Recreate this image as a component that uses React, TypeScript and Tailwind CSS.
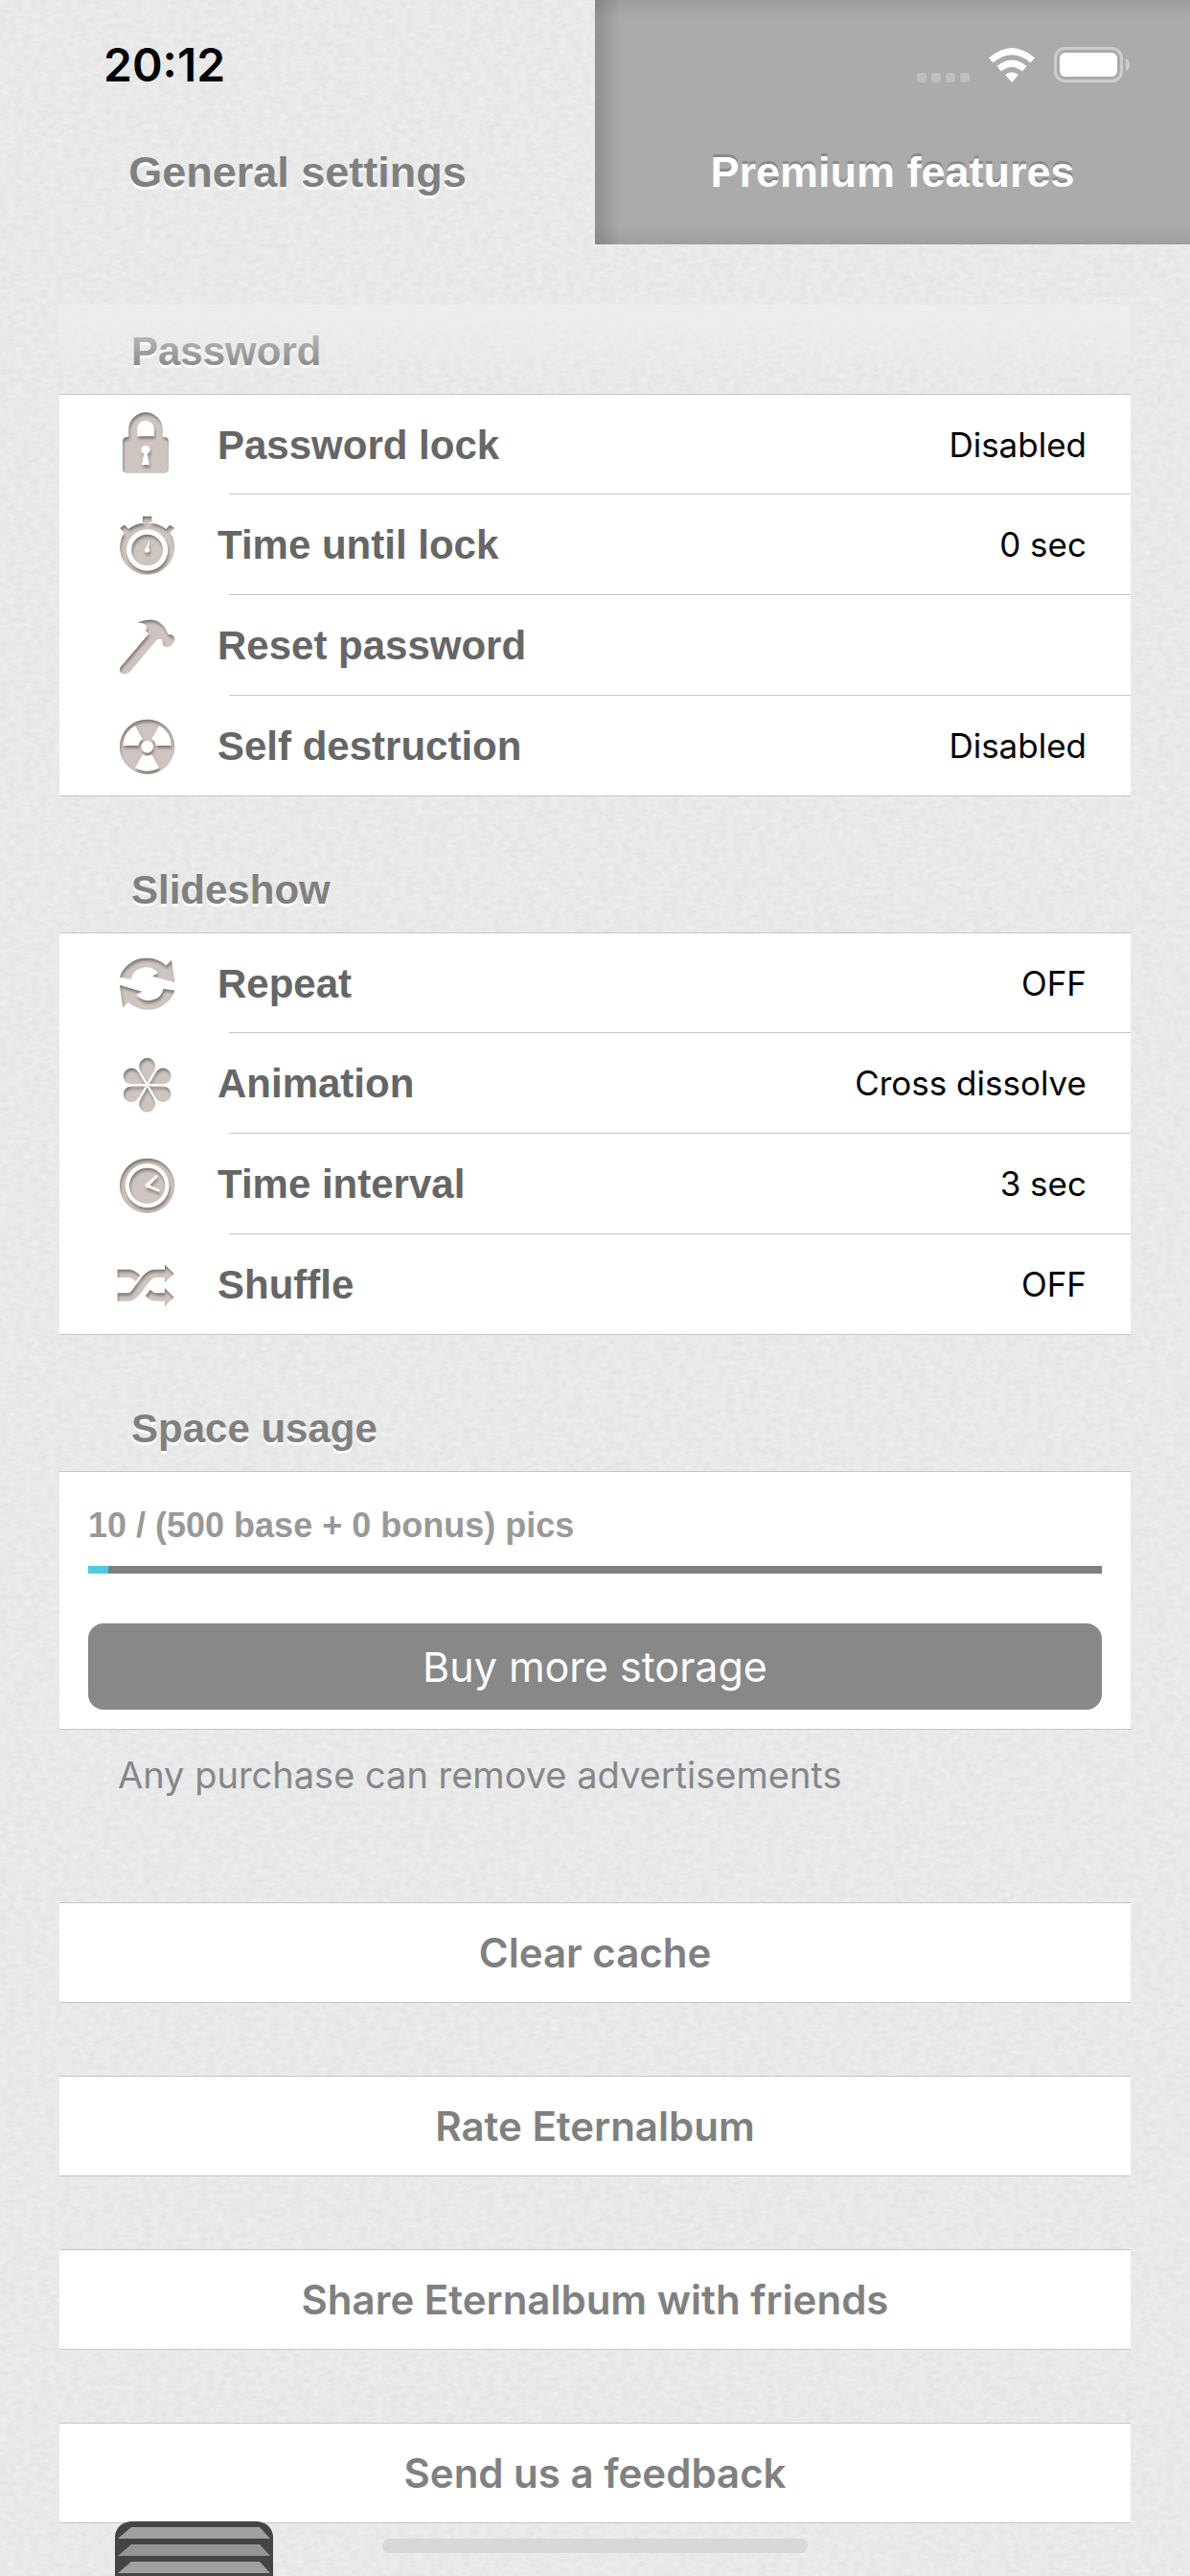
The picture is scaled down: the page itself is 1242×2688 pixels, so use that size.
import type { ReactNode } from "react";

const ICONS: Record<string, ReactNode> = {
  lock: (
    <path
      fillRule="evenodd"
      d="M38 78H43V54A53 53 0 0 1 149 54V78H154Q168 80 168 92V177Q168 191 154 191H38Q24 191 24 177V92Q24 80 38 78ZM69 76H123V54A27 28 0 0 0 69 54ZM90 131L84 166H108L102 131A14 14 0 1 0 90 131Z"
    />
  ),
  stopwatch: (
    <>
      <path
        fillRule="evenodd"
        d="M16 48L30 38L42 51A85 85 0 0 1 94 32V30H87V11H115V30H108V32A85 85 0 0 1 160 51L172 38L186 48L173 64A85 85 0 1 1 29 64ZM36 117A65 65 0 1 0 166 117A65 65 0 1 0 36 117Z"
      />
      <path
        fillRule="evenodd"
        d="M52 117A49 49 0 1 0 150 117A49 49 0 1 0 52 117ZM108 84L105 110A8 8 0 1 1 97 110Z"
      />
    </>
  ),
  hammer: (
    <path d="M70 30C85 20 118 16 135 26C150 34 162 52 166 66L176 67Q186 72 187 82Q182 102 164 106Q150 104 149 92L148 84Q140 76 130 84L46 184Q36 194 22 188Q12 180 16 170L106 64L96 54Q104 46 96 36Q84 28 70 30Z" />
  ),
  radiation: (
    <path
      fillRule="evenodd"
      d="M15 106A86 86 0 1 0 187 106A86 86 0 1 0 15 106ZM25 102A76 76 0 0 1 63 40L87 82A27 27 0 0 0 74 102ZM177 102A76 76 0 0 0 139 40L115 82A27 27 0 0 1 128 102ZM63 172L87 130A27 27 0 0 0 115 130L139 172A76 76 0 0 1 63 172ZM82 106A19 19 0 1 0 120 106A19 19 0 1 0 82 106Z"
    />
  ),
  repeat: (
    <>
      <path d="M15 83A88 86 0 0 1 160 47L177 30L187 100L118 80L135 70A48 46 0 0 0 50 89Z" />
      <path d="M187 125A88 86 0 0 1 42 161L25 178L15 108L84 128L67 138A48 46 0 0 0 152 119Z" />
    </>
  ),
  flower: (
    <path d="M101 100C94 82 76 64 76 46A25 25 0 0 1 126 46C126 64 108 82 101 100ZM106 103C118 88 125 64 140 55A25 25 0 0 1 165 98C150 107 125 100 106 103ZM106 109C125 112 150 105 165 114A25 25 0 0 1 140 157C125 148 118 124 106 109ZM101 112C108 130 126 148 126 166A25 25 0 0 1 76 166C76 148 94 130 101 112ZM96 109C84 124 77 148 62 157A25 25 0 0 1 37 114C52 105 77 112 96 109ZM96 103C77 100 52 107 37 98A25 25 0 0 1 62 55C77 64 84 88 96 103Z" />
  ),
  clock: (
    <>
      <path
        fillRule="evenodd"
        d="M15 106A86 86 0 1 0 187 106A86 86 0 1 0 15 106ZM32 106A69 69 0 1 0 170 106A69 69 0 1 0 32 106Z"
      />
      <path
        fillRule="evenodd"
        d="M45 106A56 56 0 1 0 157 106A56 56 0 1 0 45 106ZM101 97L130 71L135 76L109 104L141 119L138 125L106 113A8 8 0 1 1 101 97Z"
      />
    </>
  ),
  shuffle: (
    <>
      <path d="M8 130H42C58 130 84 56 124 56H156V41L185 69L156 96V81H128C104 81 78 155 44 155H8Z" />
      <path d="M8 56H40C58 56 68 64 78 74L64 93C56 84 50 81 38 81H8Z" />
      <path d="M111 119C118 127 124 130 132 130H156V115L185 143L156 170V155H130C114 155 104 148 96 139Z" />
    </>
  ),
};

const PASSWORD_ROWS = [
  { icon: "lock", title: "Password lock", value: "Disabled" },
  { icon: "stopwatch", title: "Time until lock", value: "0 sec" },
  { icon: "hammer", title: "Reset password" },
  { icon: "radiation", title: "Self destruction", value: "Disabled" },
];

const SLIDESHOW_ROWS = [
  { icon: "repeat", title: "Repeat", value: "OFF" },
  { icon: "flower", title: "Animation", value: "Cross dissolve" },
  { icon: "clock", title: "Time interval", value: "3 sec" },
  { icon: "shuffle", title: "Shuffle", value: "OFF" },
];

const ACTIONS = [
  "Clear cache",
  "Rate Eternalbum",
  "Share Eternalbum with friends",
  "Send us a feedback",
];

const SectionTitle = ({ title }: { title: string }) => (
  <h2 className="pl-[75px] pb-[20px] font-['Liberation_Sans',sans-serif] text-[42px] leading-[48px] font-bold text-[#808080] [text-shadow:0_3px_0_#fff]">
    {title}
  </h2>
);

interface SettingListProps {
  rows: { icon: string; title: string; value?: string }[];
}

const SettingList = ({ rows }: SettingListProps) => (
  <ul className="border-t border-[#c5c5c5] bg-white">
    {rows.map((row, i) => (
      <li key={row.title}>
        <button
          className={`flex w-full items-center pl-[58px] text-left ${
            i === 0 ? "h-[104px]" : "h-[105px]"
          } ${i === rows.length - 1 ? "border-b border-[#c5c5c5]" : ""}`}>
          <svg
            viewBox="0 0 204 204"
            className="h-[68px] w-[68px] shrink-0 fill-[#cfc5c0]"
            filter="url(#engrave)">
            {ICONS[row.icon]}
          </svg>
          <span
            className={`ml-[51px] flex h-full flex-1 items-center justify-between ${
              i < rows.length - 1
                ? "bg-[linear-gradient(#c5c5c5,#c5c5c5)] bg-[length:100%_1px] bg-[position:0_100%] bg-no-repeat"
                : ""
            }`}>
            <span className="-ml-[12px] font-['Liberation_Sans',sans-serif] text-[42px] font-bold text-[#666]">
              {row.title}
            </span>
            <span className="pr-[46px] text-[35px] text-black">
              {row.value}
            </span>
          </span>
        </button>
      </li>
    ))}
  </ul>
);

const StatusBar = () => (
  <div className="pointer-events-none absolute inset-x-0 top-0 flex h-[135px] items-center justify-between pr-[63px] pl-[108px]">
    <span className="text-[48px] font-semibold text-black">20:12</span>
    <div className="flex items-center">
      <div className="mt-[26px] flex gap-[5px]">
        <span className="h-[10px] w-[10px] rounded-[3px] bg-[#bfbfbf]" />
        <span className="h-[10px] w-[10px] rounded-[3px] bg-[#bfbfbf]" />
        <span className="h-[10px] w-[10px] rounded-[3px] bg-[#bfbfbf]" />
        <span className="h-[10px] w-[10px] rounded-[3px] bg-[#bfbfbf]" />
      </div>
      <svg viewBox="0 0 96 72" className="ml-[20px] h-[36px] w-[48px] fill-white">
        <path d="M0 21Q48 -21 96 21L87 31Q48 -2 9 31Z" />
        <path d="M17 38Q48 12 79 38L70 49Q48 31 26 49Z" />
        <path d="M34 56Q48 45 62 56L48 72Z" />
      </svg>
      <svg viewBox="0 0 158 74" className="ml-[20px] h-[37px] w-[79px]">
        <rect x="3" y="3" width="138" height="68" rx="20" fill="none" stroke="#cdcdcd" strokeWidth="6" />
        <rect x="12" y="12" width="120" height="50" rx="12" fill="#fff" />
        <path d="M150 24Q158 28 158 37Q158 46 150 50Z" fill="#cdcdcd" />
      </svg>
    </div>
  </div>
);

export default function App() {
  const used = 10;
  const total = 500;

  return (
    <div className="relative isolate min-h-screen overflow-hidden bg-[#e9e9e9] font-['Inter',sans-serif]">
      {/* Paper grain behind everything */}
      <svg className="absolute inset-0 -z-10 h-full w-full" aria-hidden="true">
        <filter id="paper" x="0" y="0" width="100%" height="100%" colorInterpolationFilters="sRGB">
          <feTurbulence type="fractalNoise" baseFrequency="0.12 0.2" numOctaves="2" seed="4" />
          <feColorMatrix values="0.06 0 0 0 0.883  0.06 0 0 0 0.883  0.06 0 0 0 0.883  0 0 0 0 1" />
        </filter>
        <filter id="engrave">
          <feGaussianBlur in="SourceAlpha" stdDeviation="1.5" />
          <feOffset dx="1" dy="3" result="moved" />
          <feComposite in="SourceAlpha" in2="moved" operator="out" result="edge" />
          <feFlood floodColor="#5f5852" floodOpacity="0.8" />
          <feComposite in2="edge" operator="in" result="shade" />
          <feMerge>
            <feMergeNode in="SourceGraphic" />
            <feMergeNode in="shade" />
          </feMerge>
        </filter>
        <rect width="100%" height="100%" filter="url(#paper)" />
      </svg>

      <header className="relative">
        <nav className="grid grid-cols-2 font-['Liberation_Sans',sans-serif] text-[45px] leading-[52px] font-bold">
          <button className="h-[255px] pt-[104px] text-[#808080] [text-shadow:0_3px_0_#fff]">
            General settings
          </button>
          <button className="h-[255px] bg-[#ababab] bg-[linear-gradient(to_right,rgba(0,0,0,0.16),transparent_28px),linear-gradient(to_bottom,rgba(0,0,0,0.08),transparent_20px),linear-gradient(to_top,rgba(0,0,0,0.08),transparent_20px)] pt-[104px] text-white [text-shadow:0_-3px_0_#8a8a8a]">
            Premium features
          </button>
        </nav>
        <StatusBar />
      </header>

      <main className="px-[62px] pt-[63px]">
        <section>
          <div className="relative pt-[25px]">
            <SectionTitle title="Password" />
            <div className="absolute inset-0 bg-[linear-gradient(rgba(238,238,238,0.9),rgba(238,238,238,0)_72px)]" />
          </div>
          <SettingList rows={PASSWORD_ROWS} />
        </section>

        <section className="pt-[74px]">
          <SectionTitle title="Slideshow" />
          <SettingList rows={SLIDESHOW_ROWS} />
        </section>

        <section className="pt-[74px]">
          <SectionTitle title="Space usage" />
          <div className="flex flex-col border-y border-[#c5c5c5] bg-white px-[30px] pt-[34px] pb-[20px]">
            <p className="font-['Liberation_Sans',sans-serif] text-[36px] leading-[44px] font-bold text-[#999]">
              10 / (500 base + 0 bonus) pics
            </p>
            <div
              role="progressbar"
              aria-valuenow={used}
              aria-valuemax={total}
              className="mt-[20px] h-[8px] bg-[#7f7f7f]">
              <div
                className="h-full bg-[#52c8e4]"
                style={{ width: `${(used / total) * 100}%` }}
              />
            </div>
            <button className="mt-[52px] h-[90px] rounded-[16px] bg-[#888] text-[43px] text-white">
              Buy more storage
            </button>
          </div>
          <p className="pt-[22px] pl-[61px] text-[38px] leading-[50px] text-[#86868b]">
            Any purchase can remove advertisements
          </p>
        </section>

        <div className="flex flex-col gap-[76px] pt-[108px]">
          {ACTIONS.map((action) => (
            <button
              key={action}
              className="h-[105px] border-y border-[#c5c5c5] bg-white text-[42px] font-semibold text-[#808080]">
              {action}
            </button>
          ))}
        </div>
      </main>

      <button aria-label="Open drawer" className="fixed bottom-0 left-[120px]">
        <svg viewBox="0 0 165 57" className="block h-[57px] w-[165px]">
          <path d="M0 57V15Q2 2 16 0H149Q163 2 165 15V57Z" fill="#444" />
          <path d="M17 6H151L162 18H3Z" fill="#a0a0a0" />
          <path d="M17 24H151L162 36H3Z" fill="#949494" />
          <path d="M17 42H151L162 54H3Z" fill="#a0a0a0" />
        </svg>
      </button>
      <div className="fixed bottom-[24px] left-1/2 h-[15px] w-[444px] -translate-x-1/2 rounded-full bg-[#d8d8d8]" />
    </div>
  );
}
